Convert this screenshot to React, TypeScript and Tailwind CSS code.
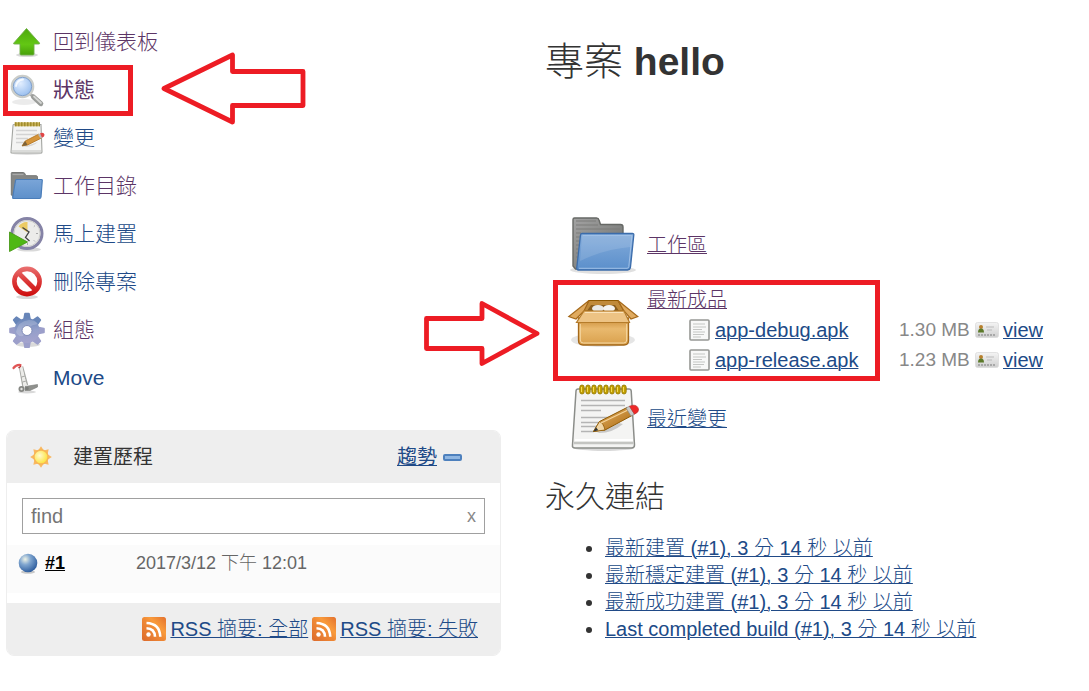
import type { ReactNode } from 'react';

type IconProps = { className: string };

function FolderIcon({ className }: IconProps) {
  return (
    <svg viewBox="0 0 72 72" className={className} aria-hidden="true">
      <defs>
        <linearGradient id="folderBack" x1="0" y1="0" x2="1" y2="1">
          <stop offset="0" stopColor="#a3a3a3" />
          <stop offset="1" stopColor="#6a6c69" />
        </linearGradient>
        <linearGradient id="folderFront" x1="0" y1="0" x2="0" y2="1">
          <stop offset="0" stopColor="#84acdb" />
          <stop offset="1" stopColor="#5b8fcb" />
        </linearGradient>
      </defs>
      <ellipse cx="36" cy="61" rx="33" ry="4" fill="#000" opacity="0.12" />
      <path d="M7.500 9H29.500q2 0 2.500 2l1.500 4.500h20q2.500 0 2.500 2.500v42H8.500L6 57V10.500Q6 9 7.500 9z" fill="url(#folderBack)" stroke="#666865" strokeWidth="1.400" />
      <path d="M9 12h20M9 16h22M9 20h44M9 24h5M9 28h4M9 32h4M9 36h4M9 40h3M9 44h3M9 48h2" stroke="#7c7d7b" strokeWidth="1.200" />
      <path d="M15 24.500H65.500q1.500 0 1.300 1.500L63.500 58q-.4 3-3 3H11.500q-2 0-1.700-2.500L13.500 26q.2-1.500 1.500-1.500z" fill="url(#folderFront)" stroke="#3b6cab" strokeWidth="1.300" />
      <path d="M15.500 26.500H65l-3.200 31q-.2 1.800-1.800 1.800H12" fill="none" stroke="#a0c0e6" strokeWidth="1" />
      <path d="M15 27h50l-1.500 11Q38 40 13 52z" fill="#fff" opacity="0.120" />
    </svg>
  );
}

function SmallFolderIcon({ className }: IconProps) {
  return (
    <svg viewBox="0 0 36 36" className={className} aria-hidden="true">
      <defs>
        <linearGradient id="smallFolderFront" x1="0" y1="0" x2="0" y2="1">
          <stop offset="0" stopColor="#7aa5d8" />
          <stop offset="1" stopColor="#5e90ca" />
        </linearGradient>
      </defs>
      <path d="M3 4.500h11.500q1 0 1.500 1.500l.8 1.700H27q1.500 0 1.500 1.500V29H4.500L2.300 27V5.200q0-.7.700-.7z" fill="#858785" stroke="#757775" strokeWidth="1" />
      <path d="M3.500 6.500h11" stroke="#a9aaa9" strokeWidth="1.200" />
      <path d="M7.500 11.500h25q.8 0 .8.800L32 29q-.2 1.500-1.500 1.500H4.500q-1 0-.8-1.200L6.500 12.500q.1-1 1-1z" fill="url(#smallFolderFront)" stroke="#4a7db9" strokeWidth="1.200" />
    </svg>
  );
}

const ringXs = [15, 21, 27, 33, 39, 45, 51, 57];

function NotepadIcon({ className }: IconProps) {
  return (
    <svg viewBox="0 0 72 72" className={className} aria-hidden="true">
      <defs>
        <linearGradient id="pencilBody" x1="0" y1="0" x2="1" y2="1">
          <stop offset="0" stopColor="#e9b96e" />
          <stop offset="1" stopColor="#a8640a" />
        </linearGradient>
      </defs>
      <ellipse cx="37" cy="65" rx="30" ry="3" fill="#000" opacity="0.15" />
      <path d="M11 6h51q2 0 2.200 2L67.500 62q0 3-3 3H8q-3 0-2.500-3L9 8q.2-2 2-2z" fill="#f4f4f3" stroke="#8b8d89" strokeWidth="1.500" />
      <path d="M7 60h59.500" stroke="#c4c5c2" strokeWidth="2.500" />
      <path d="M8 57h58" stroke="#fff" strokeWidth="2" />
      <path d="M14 17.500h44M14 22.500h44M14 27.500h20M14 34.500h36M14 39.500h30M14 43.500h20M14 48.500h13" stroke="#b4b4b4" strokeWidth="1.600" />
      {ringXs.map((x) => (
        <g key={x}>
          <rect x={x - 2.2} y="2" width="4.400" height="9" rx="2.200" fill="#c4a000" stroke="#8f7500" strokeWidth="0.800" />
          <path d={`M${x - 0.5} 4v5`} stroke="#f2dc58" strokeWidth="1" />
        </g>
      ))}
      <path d="M30 50q14 1 26-9l-4-1z" fill="#000" opacity="0.180" />
      <path d="M26.500 48.500l6-10L60 24.500l5 8L38 47z" fill="url(#pencilBody)" stroke="#8f5902" strokeWidth="1" />
      <path d="M26.500 48.500l6-10q4 1.500 5.500 8.500z" fill="#f0d6a8" stroke="#8f5902" strokeWidth="0.800" />
      <path d="M26.500 48.500l2.500-4.200 2.300 2.900z" fill="#2e3436" />
      <path d="M34 40l27-13" stroke="#f5d49a" strokeWidth="1.300" />
      <path d="M59 25l3.500-1.800 5 8L64 33z" fill="#c9cac8" stroke="#888a85" strokeWidth="0.700" />
      <path d="M62.500 23.200l3.500-1q4.500-.2 5.500 4 .5 3-4 5z" fill="#ef2929" stroke="#c03030" strokeWidth="0.700" />
    </svg>
  );
}

function SmallNotepadIcon({ className }: IconProps) {
  return (
    <svg viewBox="0 0 36 36" className={className} aria-hidden="true">
      <ellipse cx="18" cy="33.500" rx="15" ry="1.500" fill="#000" opacity="0.120" />
      <path d="M5 4.500h27l1 27.500q0 1-1 1H3q-1.200 0-1-1L4 5.500q.1-1 1-1z" fill="#f4f4f3" stroke="#a3a5a1" strokeWidth="1.100" />
      <path d="M3 31h29" stroke="#d2d3d0" strokeWidth="1.500" />
      <path d="M7 10.500h21M7 14.500h21M7 18.500h12M7 22.500h9" stroke="#d3d3d3" strokeWidth="1.300" />
      <path d="M5.500 4.300h25.500" stroke="#c9b25a" strokeWidth="4" />
      <path d="M6 4.300h25" stroke="#a08c2c" strokeWidth="4" strokeDasharray="1.500 1.500" />
      <path d="M14 27q10 0 15-5z" fill="#000" opacity="0.120" />
      <path d="M13 26l3.200-5L30 14l2.500 4L18.500 25z" fill="#d6953a" stroke="#b0701a" strokeWidth="0.800" />
      <path d="M13 26l3.200-5 2.300 4z" fill="#7d6238" />
      <path d="M29 14.500l2-1 2.500 4-2 1z" fill="#b9bab7" />
      <path d="M31 13.300q4-1.500 4.500 1.500.2 1.800-2.500 3z" fill="#e04545" />
    </svg>
  );
}

function PackageIcon({ className }: IconProps) {
  return (
    <svg viewBox="0 0 72 72" className={className} aria-hidden="true">
      <defs>
        <linearGradient id="boxBody" x1="0" y1="0" x2="0" y2="1">
          <stop offset="0" stopColor="#c98a35" />
          <stop offset="0.400" stopColor="#e9b96e" />
          <stop offset="1" stopColor="#d9a04c" />
        </linearGradient>
      </defs>
      <ellipse cx="36" cy="50" rx="32" ry="7" fill="#000" opacity="0.100" />
      <path d="M22 10.500h29l6 10.500H16z" fill="#c08a3a" stroke="#8f5902" strokeWidth="1.200" />
      <path d="M24 15h24l4 6H20z" fill="#8a5e1e" />
      <ellipse cx="31" cy="18.500" rx="6" ry="3.500" fill="#e9e9e7" />
      <ellipse cx="42" cy="18.500" rx="6" ry="3.500" fill="#f4f4f2" />
      <path d="M11.500 28h50v22.500q0 4.500-4.500 4.500H16q-4.500 0-4.500-4.500z" fill="url(#boxBody)" stroke="#a5691a" strokeWidth="1.300" />
      <path d="M13.300 34v16q0 3 3 3h40.400q3 0 3-3V34" fill="none" stroke="#f5d9a6" strokeWidth="1" />
      <path d="M22 10.500L1.800 26.500l7.200 2.500 8-8z" fill="#e0ab60" stroke="#a5691a" strokeWidth="1.200" />
      <path d="M51 10.500L70.800 26.500 64 29l-7-8z" fill="#e0ab60" stroke="#a5691a" strokeWidth="1.200" />
      <path d="M17 21h40l5.500 11.500H9.500z" fill="#edc384" stroke="#b57c2a" strokeWidth="1.200" />
      <path d="M18 22.500h38" stroke="#fae3bb" strokeWidth="1" />
    </svg>
  );
}

function UpIcon({ className }: IconProps) {
  return (
    <svg viewBox="0 0 36 36" className={className} aria-hidden="true">
      <defs>
        <linearGradient id="upFill" x1="0" y1="0" x2="0" y2="1">
          <stop offset="0" stopColor="#4da80c" />
          <stop offset="0.600" stopColor="#63c714" />
          <stop offset="1" stopColor="#48a00a" />
        </linearGradient>
      </defs>
      <ellipse cx="18" cy="31" rx="11" ry="2" fill="#000" opacity="0.15" />
      <path d="M17.500 4.500L30.500 19q.5 1-.8 1H25v10q0 1-1 1H12q-1 0-1-1V20H5.500q-1.500 0-.7-1z" fill="url(#upFill)" stroke="#6fae48" strokeWidth="0.900" strokeLinejoin="round" />
    </svg>
  );
}

function SearchIcon({ className }: IconProps) {
  return (
    <svg viewBox="0 0 36 36" className={className} aria-hidden="true">
      <defs>
        <radialGradient id="lens" cx="0.400" cy="0.350" r="0.700">
          <stop offset="0" stopColor="#e3efff" />
          <stop offset="1" stopColor="#8fb8ec" />
        </radialGradient>
      </defs>
      <ellipse cx="15" cy="30" rx="12" ry="3" fill="#000" opacity="0.08" />
      <path d="M21 22l4 3" stroke="#aaa" strokeWidth="3" />
      <path d="M24.500 25l7.300 6.700" stroke="#9a9c99" strokeWidth="5" strokeLinecap="round" />
      <path d="M25 24.500l7 6.500" stroke="#d5d6d4" strokeWidth="1.800" strokeLinecap="round" />
      <circle cx="13.500" cy="14.500" r="10.500" fill="url(#lens)" stroke="#cbcdc9" strokeWidth="2.600" />
      <circle cx="13.500" cy="14.500" r="9.200" fill="none" stroke="#7c9dcb" strokeWidth="0.900" />
      <path d="M7 14q1-6 7-6.500" fill="none" stroke="#fff" strokeWidth="1.800" strokeLinecap="round" opacity="0.800" />
    </svg>
  );
}

function ClockIcon({ className }: IconProps) {
  return (
    <svg viewBox="0 0 36 36" className={className} aria-hidden="true">
      <ellipse cx="20" cy="33.500" rx="12" ry="2" fill="#000" opacity="0.15" />
      <circle cx="18" cy="17.500" r="15" fill="#ececea" stroke="#8583a6" strokeWidth="3" />
      <circle cx="18" cy="17.500" r="13" fill="none" stroke="#c9c9c6" strokeWidth="0.900" />
      <path d="M18.500 16.500L9.500 10.500Q13 5.500 18.500 6z" fill="#eccb63" />
      <path d="M13.500 11.500l6.500 4.500-3.500 5.500 4 3.500" fill="none" stroke="#444" strokeWidth="1.300" />
      <path d="M29 17.500h-2M26 9.500l-1.200 1.200M26 25.500l-1.200-1.200M18.500 29v-2" stroke="#aaa" strokeWidth="1" />
      <path d="M.5 16L18.500 26 .5 35.500z" fill="#4fb814" stroke="#4a9a1a" strokeWidth="0.900" />
    </svg>
  );
}

function ForbiddenIcon({ className }: IconProps) {
  return (
    <svg viewBox="0 0 36 36" className={className} aria-hidden="true">
      <defs>
        <linearGradient id="ban" gradientUnits="userSpaceOnUse" x1="18" y1="3" x2="18" y2="33">
          <stop offset="0" stopColor="#e97070" />
          <stop offset="0.500" stopColor="#db3535" />
          <stop offset="1" stopColor="#cc0a0a" />
        </linearGradient>
      </defs>
      <ellipse cx="18" cy="33" rx="11" ry="2" fill="#000" opacity="0.150" />
      <circle cx="18" cy="17.500" r="12.600" fill="#fff" stroke="url(#ban)" strokeWidth="4.600" />
      <path d="M9.500 9l17 17" stroke="url(#ban)" strokeWidth="4.800" />
    </svg>
  );
}

const toothAngles = [0, 45, 90, 135, 180, 225, 270, 315];

function GearIcon({ className }: IconProps) {
  return (
    <svg viewBox="0 0 36 36" className={className} aria-hidden="true">
      <defs>
        <linearGradient id="gearFill" gradientUnits="userSpaceOnUse" x1="18" y1="0" x2="20" y2="36">
          <stop offset="0" stopColor="#5479b0" />
          <stop offset="0.500" stopColor="#939fca" />
          <stop offset="1" stopColor="#ada6cf" />
        </linearGradient>
      </defs>
      <ellipse cx="19" cy="32.500" rx="12" ry="2.500" fill="#000" opacity="0.150" />
      {toothAngles.map((a) => (
        <path key={a} d="M14 8l1.200-6.500q.1-.8 1-.8h3.600q.9 0 1 .8L22 8z" fill={a < 90 || a > 270 ? '#6785b8' : '#9c9fca'} transform={`rotate(${a} 18 18.500)`} />
      ))}
      <circle cx="18" cy="18.500" r="12.500" fill="url(#gearFill)" />
      <path d="M7 20Q9 9 20 8q6 0 9 4-12 1-15 12-5 1-7-4z" fill="#fff" opacity="0.180" />
      <circle cx="18" cy="18.500" r="5" fill="#fff" stroke="#7f8bb8" strokeWidth="1" />
    </svg>
  );
}

function HandTruckIcon({ className }: IconProps) {
  return (
    <svg viewBox="0 0 36 36" className={className} aria-hidden="true">
      <ellipse cx="18" cy="32" rx="9" ry="1.500" fill="#000" opacity="0.150" />
      <path d="M10.500 7l3.500 20M13.500 6.500l5 18.500" stroke="#a9aba7" strokeWidth="1.400" />
      <path d="M12 7l4.200 19" stroke="#ecece9" strokeWidth="2.800" />
      <path d="M12.500 17l3.500-1M13.500 22l3.500-1" stroke="#a0a29e" strokeWidth="0.900" />
      <path d="M4.500 8Q7 4.500 11.500 5" fill="none" stroke="#e05555" strokeWidth="2.200" strokeLinecap="round" />
      <path d="M9.500 8l2.500-2" stroke="#b33" strokeWidth="1.400" />
      <path d="M16 26.500l12.500-2v2.500L21 30.500h-5z" fill="#8f918d" stroke="#777975" strokeWidth="0.600" />
      <circle cx="12.500" cy="29" r="3" fill="#858783" />
      <circle cx="12.500" cy="29" r="1.200" fill="#e2e2e0" />
      <circle cx="18" cy="28.500" r="1.800" fill="#7b7d79" />
    </svg>
  );
}

function SunIcon({ className }: IconProps) {
  return (
    <svg viewBox="0 0 24 24" className={className} aria-hidden="true">
      <defs>
        <radialGradient id="sun" cx="0.400" cy="0.400" r="0.600">
          <stop offset="0" stopColor="#fffbd0" />
          <stop offset="1" stopColor="#fde23c" />
        </radialGradient>
      </defs>
      <g fill="#f9b860">
        {toothAngles.map((a) => (
          <path key={a} d="M9.200 5.500L12 1.200l2.800 4.300z" transform={`rotate(${a} 12 12)`} />
        ))}
      </g>
      <circle cx="12" cy="12" r="7" fill="url(#sun)" stroke="#f7b556" strokeWidth="1.300" />
    </svg>
  );
}

function BallIcon({ className }: IconProps) {
  return (
    <svg viewBox="0 0 24 24" className={className} aria-hidden="true">
      <defs>
        <radialGradient id="ball" cx="0.350" cy="0.300" r="0.750">
          <stop offset="0" stopColor="#eef3e6" />
          <stop offset="0.400" stopColor="#7fa5cf" />
          <stop offset="1" stopColor="#2a5a9c" />
        </radialGradient>
      </defs>
      <ellipse cx="12" cy="21" rx="7" ry="1.800" fill="#000" opacity="0.200" />
      <circle cx="12" cy="12" r="9.300" fill="url(#ball)" />
    </svg>
  );
}

function RssIcon({ className }: IconProps) {
  return (
    <svg viewBox="0 0 24 24" className={className} aria-hidden="true">
      <defs>
        <linearGradient id="rss" x1="0" y1="1" x2="1" y2="0">
          <stop offset="0" stopColor="#dc6a2c" />
          <stop offset="0.500" stopColor="#f08a35" />
          <stop offset="0.650" stopColor="#f99b3c" />
          <stop offset="1" stopColor="#e2702d" />
        </linearGradient>
      </defs>
      <rect width="24" height="24" rx="2.500" fill="url(#rss)" />
      <circle cx="6.500" cy="17.500" r="2.200" fill="#fff" />
      <path d="M4.500 11.200q8.200.3 8.500 8.500M4.500 6q13.200.5 13.800 13.700" fill="none" stroke="#fff" strokeWidth="2.600" />
    </svg>
  );
}

function FileIcon({ className }: IconProps) {
  return (
    <svg viewBox="0 0 21 22" className={className} aria-hidden="true">
      <rect x="1" y="1" width="19" height="20" rx="1" fill="#f8f8f7" stroke="#979895" strokeWidth="1.600" />
      <path d="M4 5h12M4 8h13M4 10.500h9M4 13h12M4 15.500h11M4 18h8" stroke="#c4c5c3" strokeWidth="1.100" />
    </svg>
  );
}

function BadgeIcon({ className }: IconProps) {
  return (
    <svg viewBox="0 0 24 16" className={className} aria-hidden="true">
      <defs>
        <linearGradient id="card" x1="0" y1="0" x2="0" y2="1">
          <stop offset="0" stopColor="#f4f4f4" />
          <stop offset="1" stopColor="#cfcfcf" />
        </linearGradient>
      </defs>
      <rect x="0.500" y="0.500" width="23" height="15" rx="2" fill="url(#card)" stroke="#dcdcdc" strokeWidth="0.800" />
      <circle cx="6" cy="5" r="2" fill="#b87f2c" />
      <path d="M3 10.500q0-4 3-4t3 4z" fill="#5c7a2a" />
      <path d="M11 5h8M12 8h5" stroke="#bbb" strokeWidth="1.200" />
      <path d="M3 13h18" stroke="#999" strokeWidth="1.600" strokeDasharray="2 1" />
    </svg>
  );
}

type Task = { label: string; icon: ReactNode; visited?: boolean; current?: boolean };

const small = 'size-9 shrink-0';

const tasks: Task[] = [
  { label: '回到儀表板', icon: <UpIcon className={small} />, visited: true },
  { label: '狀態', icon: <SearchIcon className={small} />, visited: true, current: true },
  { label: '變更', icon: <SmallNotepadIcon className={small} /> },
  { label: '工作目錄', icon: <SmallFolderIcon className={small} />, visited: true },
  { label: '馬上建置', icon: <ClockIcon className={small} /> },
  { label: '刪除專案', icon: <ForbiddenIcon className={small} /> },
  { label: '組態', icon: <GearIcon className={small} />, visited: true },
  { label: 'Move', icon: <HandTruckIcon className={small} /> },
];

const artifacts = [
  { name: 'app-debug.apk', size: '1.30 MB' },
  { name: 'app-release.apk', size: '1.23 MB' },
];

const permalinks = [
  '最新建置 (#1), 3 分 14 秒 以前',
  '最新穩定建置 (#1), 3 分 14 秒 以前',
  '最新成功建置 (#1), 3 分 14 秒 以前',
  'Last completed build (#1), 3 分 14 秒 以前',
];

function TaskList() {
  return (
    <nav>
      <ul>
        {tasks.map((task) => (
          <li key={task.label} className="relative flex h-12 items-center pl-[3px]">
            <a
              href="#"
              className={`flex items-center gap-2 text-[21px] leading-8 ${task.visited ? 'text-[#5c3566]' : 'text-[#204a87]'} ${task.current ? 'font-normal' : ''}`}
            >
              {task.icon}
              {task.label}
            </a>
            {task.current && (
              <>
                <div className="pointer-events-none absolute -top-px -left-[3px] h-[51px] w-[130px] border-5 border-[#ed1c24]" />
                <svg viewBox="0 0 146 76" className="pointer-events-none absolute -top-4 left-[154px] h-[76px] w-[146px]" aria-hidden="true">
                  <path d="M4 38.500L72.500 5v16.500H143v34H72.500V72z" fill="none" stroke="#ed1c24" strokeWidth="4.800" strokeLinejoin="round" />
                </svg>
              </>
            )}
          </li>
        ))}
      </ul>
    </nav>
  );
}

function RssLink({ label }: { label: string }) {
  return (
    <a href="#" className="flex items-center gap-1 text-[#204a87]">
      <RssIcon className="size-6 shrink-0" />
      <span className="underline decoration-1">{label}</span>
    </a>
  );
}

function BuildHistory() {
  return (
    <section className="mt-7 overflow-hidden rounded-lg border border-[#eeeeee] text-xl leading-7">
      <header className="flex h-[52px] items-center bg-[#eeeeee] pr-[38px] pl-[22px]">
        <SunIcon className="size-6" />
        <h2 className="ml-5 grow font-normal text-[#333]">建置歷程</h2>
        <a href="#" className="font-normal text-[#204a87] underline decoration-1">趨勢</a>
        <button type="button" aria-label="收合" className="ml-1.5 h-[7px] w-[19px] rounded-xs border-2 border-[#4d80bd] bg-[#8fb6e2]" />
      </header>
      <div className="px-[15px] pt-[15px] pb-[11px]">
        <div className="flex h-9 items-center border border-[#a0a0a0] bg-white px-2">
          <input
            aria-label="find"
            placeholder="find"
            className="min-w-0 grow bg-transparent outline-none placeholder:text-[#757575]"
          />
          <button type="button" className="text-lg text-[#888]">x</button>
        </div>
      </div>
      <div className="flex h-12 items-start bg-[#fbfbfb] pt-1 pl-[9px] text-lg leading-7">
        <BallIcon className="mt-0.5 size-6" />
        <a href="#" className="ml-[5px] w-[91px] font-bold text-black underline decoration-1">#1</a>
        <span className="text-[#666]">2017/3/12 下午 12:01</span>
      </div>
      <footer className="mt-2.5 flex h-[52px] items-center justify-end gap-1 bg-[#eeeeee] pr-[22px]">
        <RssLink label="RSS 摘要: 全部" />
        <RssLink label="RSS 摘要: 失敗" />
      </footer>
    </section>
  );
}

function ProjectLinks() {
  return (
    <div className="mt-[123px] pl-[22px] text-xl leading-[30px]">
      <div className="flex items-center gap-2">
        <FolderIcon className="size-[72px] shrink-0" />
        <a href="#" className="text-[#5c3566] underline decoration-1">工作區</a>
      </div>
      <div className="relative mt-1 flex items-start gap-2 pb-2">
        <PackageIcon className="mt-[5px] size-[72px] shrink-0" />
        <div>
          <a href="#" className="text-[#5c3566] underline decoration-1">最新成品</a>
          <table className="ml-[42px]">
            <tbody>
              {artifacts.map((file) => (
                <tr key={file.name} className="h-[30px]">
                  <td className="w-[26px] p-0">
                    <FileIcon className="h-[22px] w-[21px]" />
                  </td>
                  <td className="w-[184px] p-0">
                    <a href="#" className="text-[#204a87] underline decoration-1">{file.name}</a>
                  </td>
                  <td className="w-[76px] p-0 text-[19px] whitespace-nowrap text-[#888]">{file.size}</td>
                  <td className="w-7 p-0">
                    <BadgeIcon className="h-4 w-6" />
                  </td>
                  <td className="p-0">
                    <a href="#" className="text-[#204a87] underline decoration-1">view</a>
                  </td>
                </tr>
              ))}
            </tbody>
          </table>
        </div>
        <div className="pointer-events-none absolute -top-[5px] -left-[14px] h-[101px] w-[327px] border-5 border-[#ed1c24]" />
        <svg viewBox="0 0 118 68" className="pointer-events-none absolute top-[14px] -left-[144px] h-[68px] w-[118px]" aria-hidden="true">
          <path d="M3.500 19.500H59V4.500L114 34.500 59 64.500V49.500H3.500z" fill="none" stroke="#ed1c24" strokeWidth="4.800" strokeLinejoin="round" />
        </svg>
      </div>
      <div className="flex items-center gap-2">
        <NotepadIcon className="size-[72px] shrink-0" />
        <a href="#" className="text-[#204a87] underline decoration-1">最近變更</a>
      </div>
    </div>
  );
}

export default function App() {
  return (
    <div className="grid min-h-screen grid-cols-[495fr_544fr] items-start gap-x-11 bg-white pb-8 pl-1.5 font-['Liberation_Sans','Noto_Sans_CJK_TC',sans-serif] font-light text-[#333]">
      <aside className="pt-[18px]">
        <TaskList />
        <BuildHistory />
      </aside>
      <main className="pt-[38px]">
        <h1 className="text-[39px] leading-[48px]">
          專案 <span className="font-bold">hello</span>
        </h1>
        <ProjectLinks />
        <h2 className="mt-6 text-3xl leading-9">永久連結</h2>
        <ul className="mt-5 list-disc pl-[60px] text-xl leading-[27px]">
          {permalinks.map((label) => (
            <li key={label}>
              <a href="#" className="text-[#204a87] underline decoration-1">{label}</a>
            </li>
          ))}
        </ul>
      </main>
    </div>
  );
}
